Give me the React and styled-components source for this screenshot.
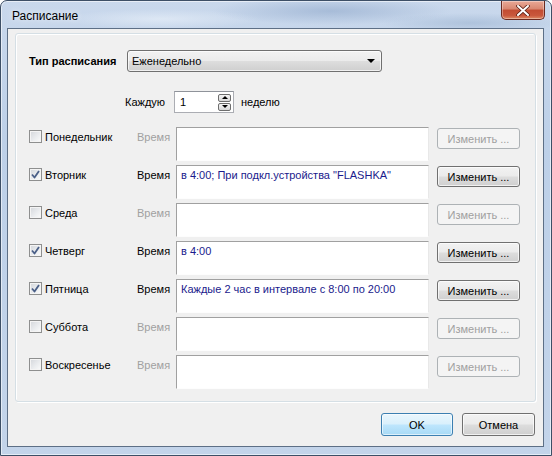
import React from "react";
import styled, { createGlobalStyle, css } from "styled-components";

const Global = createGlobalStyle`
  html, body { margin: 0; padding: 0; background: #ffffff; }
  body { font-family: "Liberation Sans", Arial, sans-serif; font-size: 11px; }
  * { box-sizing: border-box; }
`;

const Window = styled.div`
  width: 552px;
  height: 456px;
  display: flex;
  flex-direction: column;
  border: 1px solid #3d4f66;
  border-radius: 7px 7px 0 0;
  background:
    radial-gradient(ellipse 120px 14px at 330px 10px, rgba(140,165,200,0.55), transparent),
    radial-gradient(ellipse 90px 10px at 470px 22px, rgba(150,175,205,0.5), transparent),
    radial-gradient(ellipse 100px 10px at 160px 18px, rgba(235,242,250,0.6), transparent),
    linear-gradient(180deg, #c9d8ec 0%, #bdd0e8 30%, #c3d4ea 100%);
  box-shadow: inset 0 0 0 1px rgba(255,255,255,0.55);
  overflow: hidden;
`;

const TitleBar = styled.div`
  height: 27px;
  flex: none;
  display: flex;
  align-items: flex-start;
  justify-content: space-between;
  padding-left: 11px;
`;

const Title = styled.div`
  font-family: "Liberation Sans", Arial, sans-serif;
  font-size: 12px;
  color: #000;
  margin-top: 8px;
  text-shadow: 0 0 6px rgba(255,255,255,0.9);
`;

const CloseBtn = styled.div`
  width: 44px;
  height: 19px;
  margin-right: 6px;
  border: 1px solid #6b2a20;
  border-top: none;
  border-radius: 0 0 5px 5px;
  background: linear-gradient(180deg, #e9a997 0%, #d88670 45%, #c24c32 50%, #c9573c 80%, #dd8a64 100%);
  box-shadow: inset 0 0 0 1px rgba(255,255,255,0.35);
  display: flex;
  align-items: center;
  justify-content: center;
`;

const Client = styled.div`
  flex: 1;
  margin: 0 7px 8px 6px;
  border: 1px solid #5d6f86;
  background: #f0f0f0;
  display: flex;
  flex-direction: column;
`;

const Group = styled.div`
  margin: 4px 7px 0 7px;
  height: 369px;
  border: 1px solid #d5dfe5;
  border-radius: 3px;
  box-shadow: 1px 1px 0 #ffffff, inset 1px 1px 0 #ffffff;
  padding: 16px 15px 0 13px;
  display: flex;
  flex-direction: column;
`;

const TypeRow = styled.div`
  display: flex;
  align-items: center;
  height: 22px;
`;

const BoldLabel = styled.span`
  font-weight: bold;
  width: 98px;
  color: #000;
`;

const Combo = styled.div`
  width: 255px;
  height: 22px;
  border: 1px solid #707070;
  border-radius: 3px;
  background: linear-gradient(180deg, #f2f2f2 0%, #ebebeb 48%, #dddddd 52%, #cfcfcf 100%);
  box-shadow: inset 0 0 0 1px rgba(255,255,255,0.7);
  display: flex;
  align-items: center;
  justify-content: space-between;
  padding: 0 5px 0 4px;
  color: #000;
`;

const Arrow = styled.span`
  width: 0;
  height: 0;
  border-left: 4px solid transparent;
  border-right: 4px solid transparent;
  border-top: 4px solid #000;
  margin-right: 1px;
`;

const EveryRow = styled.div`
  display: flex;
  align-items: center;
  height: 22px;
  margin-top: 19px;
  padding-left: 96px;
  color: #000;
`;

const EveryLabel = styled.span`
  width: 49px;
`;

const Spin = styled.div`
  width: 60px;
  height: 22px;
  border: 1px solid #abadb3;
  border-top-color: #8f939a;
  background: #fff;
  display: flex;
  align-items: center;
  justify-content: space-between;
  padding: 0 2px 0 5px;
  margin-right: 7px;
`;

const SpinButtons = styled.div`
  width: 13px;
  height: 17px;
  display: flex;
  flex-direction: column;
  gap: 1px;
`;

const SpinBtn = styled.div`
  flex: 1;
  border: 1px solid #6d6d6d;
  border-radius: 2px;
  background: linear-gradient(180deg, #f6f6f6, #d6d6d6);
  display: flex;
  align-items: center;
  justify-content: center;
`;

const Tri = styled.span`
  width: 0;
  height: 0;
  border-left: 3px solid transparent;
  border-right: 3px solid transparent;
  ${(p) =>
    p.$up
      ? css`border-bottom: 3px solid #000;`
      : css`border-top: 3px solid #000;`}
`;

const Days = styled.div`
  margin-top: 14px;
  display: flex;
  flex-direction: column;
  gap: 4px;
`;

const DayRow = styled.div`
  display: grid;
  grid-template-columns: 108px 39px 253px 91px;
  height: 34px;
  align-items: start;
`;

const DayCell = styled.label`
  display: flex;
  align-items: center;
  gap: 3px;
  padding-top: 3px;
  color: #000;
`;

const Box = styled.span`
  width: 13px;
  height: 13px;
  flex: none;
  border: 1px solid #8e8f8f;
  background: linear-gradient(135deg, #d3d6db 0%, #eceef0 60%, #fbfbfb 100%);
  box-shadow: inset 0 0 0 1px #f4f4f4;
  display: flex;
  align-items: center;
  justify-content: center;
`;

const TimeLabel = styled.span`
  padding-top: 4px;
  color: ${(p) => (p.$on ? "#000" : "#a0a0a0")};
`;

const TextBox = styled.div`
  height: 34px;
  background: #fff;
  border-top: 1px solid #a0a0a0;
  border-left: 1px solid #a0a0a0;
  border-right: 1px solid #e8e8e8;
  border-bottom: 1px solid #fdfdfd;
  padding: 3px 4px;
  color: #1a1a8c;
  white-space: nowrap;
  overflow: hidden;
`;

const Button = styled.div`
  height: 21px;
  margin-top: 1px;
  margin-left: 8px;
  border-radius: 3px;
  display: flex;
  align-items: center;
  justify-content: center;
  ${(p) =>
    p.$disabled
      ? css`
          border: 1px solid #adb2b5;
          background: #f4f4f4;
          color: #a0a0a0;
        `
      : css`
          border: 1px solid #707070;
          background: linear-gradient(180deg, #f2f2f2 0%, #ebebeb 48%, #dddddd 52%, #cfcfcf 100%);
          box-shadow: inset 0 0 0 1px rgba(255,255,255,0.7);
          color: #000;
        `}
`;

const Footer = styled.div`
  display: flex;
  justify-content: flex-end;
  gap: 9px;
  margin-top: 11px;
  padding-right: 8px;
`;

const DlgButton = styled.div`
  width: ${(p) => p.$w}px;
  height: 23px;
  border-radius: 3px;
  display: flex;
  align-items: center;
  justify-content: center;
  color: #000;
  ${(p) =>
    p.$default
      ? css`
          border: 1px solid #3c7fb1;
          background: linear-gradient(180deg, #eaf6fd 0%, #d9f0fc 48%, #bee6fd 52%, #a7d9f5 100%);
          box-shadow: inset 0 0 0 1px rgba(255,255,255,0.6);
        `
      : css`
          border: 1px solid #707070;
          background: linear-gradient(180deg, #f2f2f2 0%, #ebebeb 48%, #dddddd 52%, #cfcfcf 100%);
          box-shadow: inset 0 0 0 1px rgba(255,255,255,0.7);
        `}
`;

const Check = () => (
  <svg width="9" height="9" viewBox="0 0 9 9">
    <path d="M1 4.5 L3.5 7.5 L8 1" fill="none" stroke="#4a5f87" strokeWidth="1.8" strokeLinejoin="round" />
  </svg>
);

const CloseX = () => (
  <svg width="14" height="11" viewBox="0 0 14 11">
    <path d="M2 1 L12 10 M12 1 L2 10" stroke="#5a2015" strokeWidth="3.6" strokeLinecap="round" />
    <path d="M2 1 L12 10 M12 1 L2 10" stroke="#ffffff" strokeWidth="2" strokeLinecap="round" />
  </svg>
);

const days = [
  { name: "Понедельник", on: false, text: "" },
  { name: "Вторник", on: true, text: 'в 4:00; При подкл.устройства "FLASHKA"' },
  { name: "Среда", on: false, text: "" },
  { name: "Четверг", on: true, text: "в 4:00" },
  { name: "Пятница", on: true, text: "Каждые 2 час в интервале с 8:00 по 20:00" },
  { name: "Суббота", on: false, text: "" },
  { name: "Воскресенье", on: false, text: "" },
];

export default function App() {
  return (
    <>
      <Global />
      <Window>
        <TitleBar>
          <Title>Расписание</Title>
          <CloseBtn>
            <CloseX />
          </CloseBtn>
        </TitleBar>
        <Client>
          <Group>
            <TypeRow>
              <BoldLabel>Тип расписания</BoldLabel>
              <Combo>
                <span>Еженедельно</span>
                <Arrow />
              </Combo>
            </TypeRow>
            <EveryRow>
              <EveryLabel>Каждую</EveryLabel>
              <Spin>
                <span>1</span>
                <SpinButtons>
                  <SpinBtn><Tri $up /></SpinBtn>
                  <SpinBtn><Tri /></SpinBtn>
                </SpinButtons>
              </Spin>
              <span>неделю</span>
            </EveryRow>
            <Days>
              {days.map((d) => (
                <DayRow key={d.name}>
                  <DayCell>
                    <Box>{d.on && <Check />}</Box>
                    {d.name}
                  </DayCell>
                  <TimeLabel $on={d.on}>Время</TimeLabel>
                  <TextBox>{d.text}</TextBox>
                  <Button $disabled={!d.on}>Изменить ...</Button>
                </DayRow>
              ))}
            </Days>
          </Group>
          <Footer>
            <DlgButton $w={72} $default>OK</DlgButton>
            <DlgButton $w={73}>Отмена</DlgButton>
          </Footer>
        </Client>
      </Window>
    </>
  );
}
